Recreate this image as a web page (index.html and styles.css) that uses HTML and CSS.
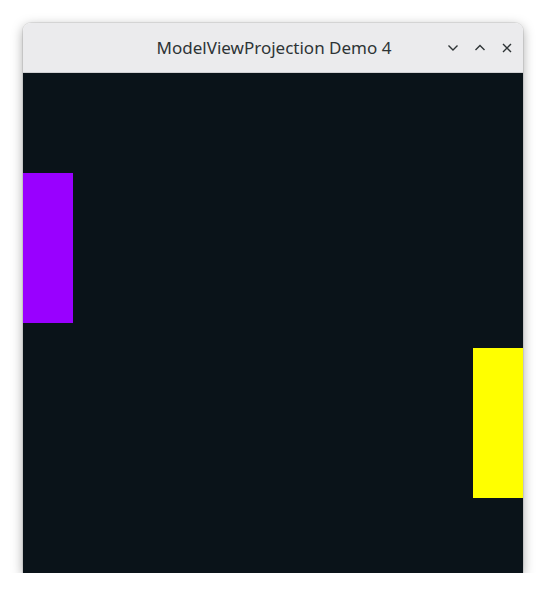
FILE: index.html
```html
<!DOCTYPE html>
<html>
<head>
<meta charset="utf-8">
<link rel="stylesheet" href="styles.css">
</head>
<body>
<div class="window">
  <div class="titlebar">
    <div class="title">ModelViewProjection Demo 4</div>
    <div class="controls">
      <svg class="btn" width="14" height="14" viewBox="0 0 14 14"><path d="M2.5 4.5 L7 9 L11.5 4.5" fill="none" stroke="#2e3436" stroke-width="1.4"/></svg>
      <svg class="btn" width="14" height="14" viewBox="0 0 14 14"><path d="M2.5 9 L7 4.5 L11.5 9" fill="none" stroke="#2e3436" stroke-width="1.4"/></svg>
      <svg class="btn" width="14" height="14" viewBox="0 0 14 14"><path d="M3 3 L11 11 M11 3 L3 11" fill="none" stroke="#2e3436" stroke-width="1.4"/></svg>
    </div>
  </div>
  <div class="canvas">
    <div class="rect purple"></div>
    <div class="rect yellow"></div>
  </div>
</div>
</body>
</html>
```
FILE: styles.css
```css
html, body { margin: 0; padding: 0; background: #ffffff; }
body { padding: 23px 0 0 23px; }
.window {
  width: 500px;
  border-radius: 8px 8px 0 0;
  box-shadow: 0 3px 12px rgba(0,0,0,0.35), 0 0 0 1px rgba(0,0,0,0.08);
  overflow: hidden;
}
.titlebar {
  height: 49px;
  background: #ebebed;
  border-bottom: 1px solid #d0d0d3;
  display: flex;
  align-items: center;
  justify-content: center;
  position: relative;
}
.title {
  font-family: "Noto Sans", "Open Sans", sans-serif;
  font-size: 17px;
  color: #2e3436;
  margin-left: 2px;
}
.controls {
  position: absolute;
  right: 9px;
  top: 18px;
  display: flex;
  gap: 13px;
}
.btn { display: block; }
.canvas {
  width: 500px;
  height: 500px;
  background: #0a1319;
  position: relative;
}
.rect { position: absolute; width: 50px; height: 150px; }
.purple { left: 0; top: 100px; background: #9900ff; }
.yellow { left: 450px; top: 275px; background: #ffff00; }
```
